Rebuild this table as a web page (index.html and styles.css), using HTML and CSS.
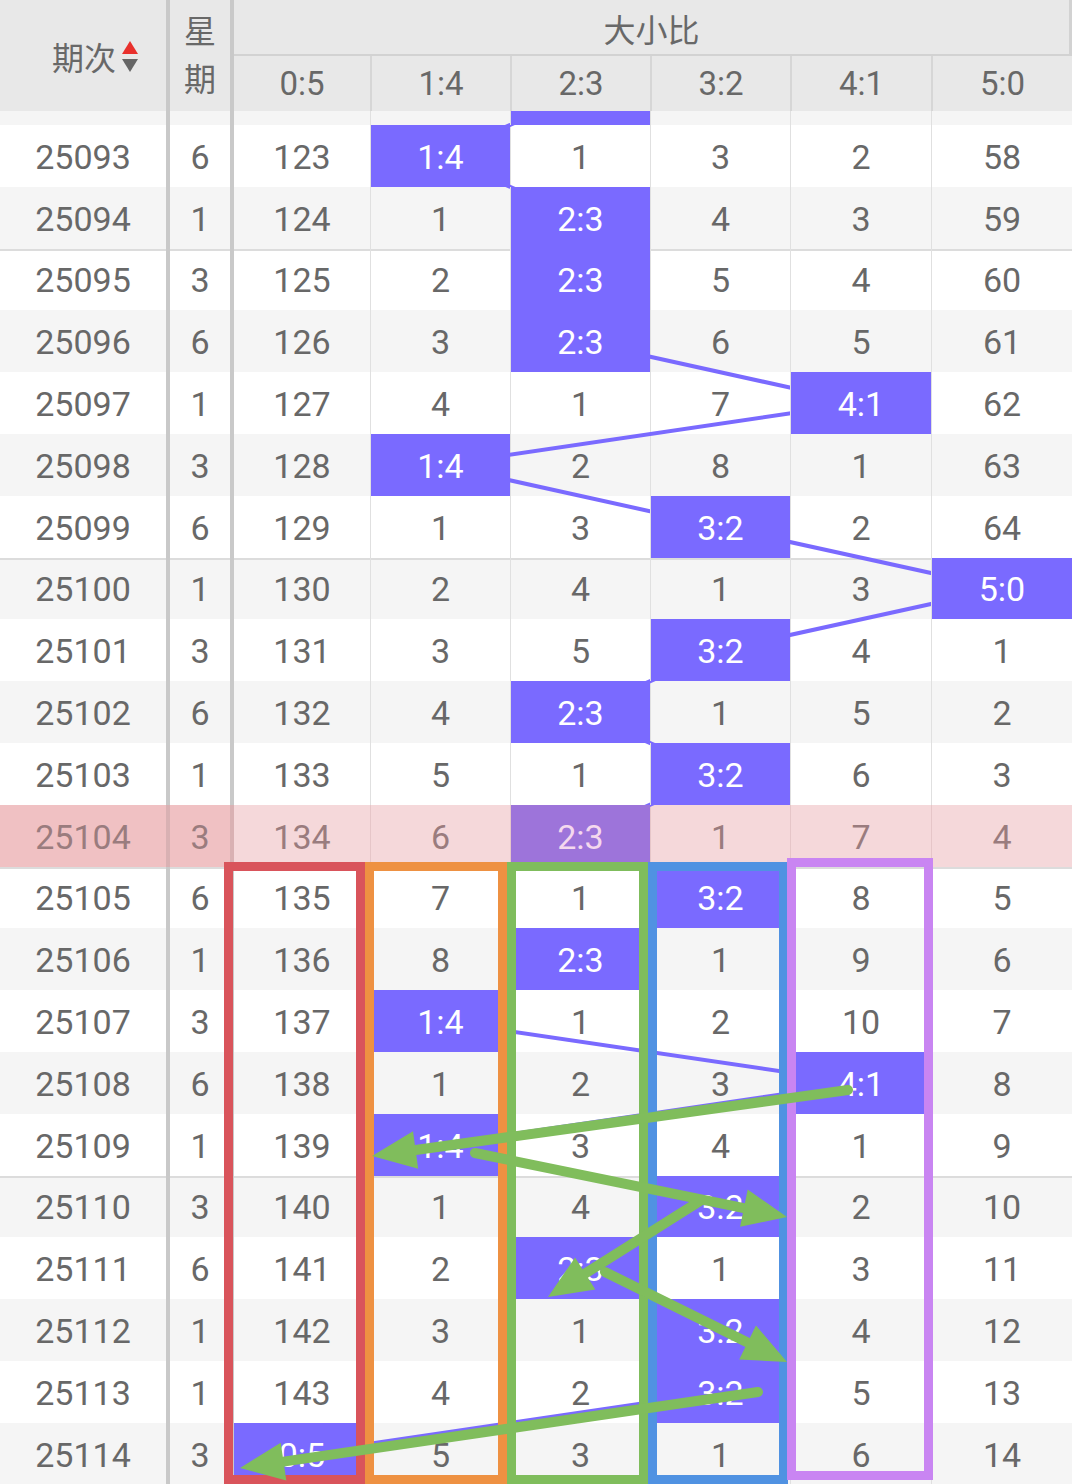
FILE: index.html
```html
<!DOCTYPE html>
<html lang="zh-CN">
<head>
<meta charset="utf-8">
<title>大小比走势</title>
<link rel="stylesheet" href="styles.css">
</head>
<body>
<div class="head">
  <div class="h-id"><span>期次</span><svg class="sort" width="16" height="32" viewBox="0 0 16 32"><polygon points="8,0 16,13 0,13" fill="#e8302c"/><polygon points="0,18 16,18 8,31" fill="#666"/></svg></div>
  <div class="h-wk"><span>星</span><span>期</span></div>
  <div class="h-grp">大小比</div>
  <div class="h-r first">0:5</div>
  <div class="h-r">1:4</div>
  <div class="h-r">2:3</div>
  <div class="h-r">3:2</div>
  <div class="h-r">4:1</div>
  <div class="h-r">5:0</div>
</div>
<div class="tbl">
  <svg class="trend" width="1072" height="1373" viewBox="0 0 1072 1373">
    <polyline fill="none" stroke="#7a6aff" stroke-width="4" stroke-linejoin="round" points="580,-16.9 440,44.9 580,106.7 580,168.5 580,230.3 860.5,292.1 440,353.9 720,415.7 1001.5,477.5 720,539.3 580,601.1 720,662.9 580,724.7 720,786.5 580,848.3 440,910.1 860.5,971.9 440,1033.7 720,1095.5 580,1157.3 720,1219.1 720,1280.9 302,1342.7"/>
  </svg>
  <div class="row g part"><div class="c id"></div><div class="c wk"></div><div class="c r"></div><div class="c r"></div><div class="c r on"></div><div class="c r"></div><div class="c r"></div><div class="c r"></div></div>
  <div class="row"><div class="c id">25093</div><div class="c wk">6</div><div class="c r">123</div><div class="c r on">1:4</div><div class="c r">1</div><div class="c r">3</div><div class="c r">2</div><div class="c r">58</div></div>
  <div class="row g"><div class="c id">25094</div><div class="c wk">1</div><div class="c r">124</div><div class="c r">1</div><div class="c r on">2:3</div><div class="c r">4</div><div class="c r">3</div><div class="c r">59</div></div>
  <div class="row sep"><div class="c id">25095</div><div class="c wk">3</div><div class="c r">125</div><div class="c r">2</div><div class="c r on">2:3</div><div class="c r">5</div><div class="c r">4</div><div class="c r">60</div></div>
  <div class="row g"><div class="c id">25096</div><div class="c wk">6</div><div class="c r">126</div><div class="c r">3</div><div class="c r on">2:3</div><div class="c r">6</div><div class="c r">5</div><div class="c r">61</div></div>
  <div class="row"><div class="c id">25097</div><div class="c wk">1</div><div class="c r">127</div><div class="c r">4</div><div class="c r">1</div><div class="c r">7</div><div class="c r on">4:1</div><div class="c r">62</div></div>
  <div class="row g"><div class="c id">25098</div><div class="c wk">3</div><div class="c r">128</div><div class="c r on">1:4</div><div class="c r">2</div><div class="c r">8</div><div class="c r">1</div><div class="c r">63</div></div>
  <div class="row"><div class="c id">25099</div><div class="c wk">6</div><div class="c r">129</div><div class="c r">1</div><div class="c r">3</div><div class="c r on">3:2</div><div class="c r">2</div><div class="c r">64</div></div>
  <div class="row g sep"><div class="c id">25100</div><div class="c wk">1</div><div class="c r">130</div><div class="c r">2</div><div class="c r">4</div><div class="c r">1</div><div class="c r">3</div><div class="c r on">5:0</div></div>
  <div class="row"><div class="c id">25101</div><div class="c wk">3</div><div class="c r">131</div><div class="c r">3</div><div class="c r">5</div><div class="c r on">3:2</div><div class="c r">4</div><div class="c r">1</div></div>
  <div class="row g"><div class="c id">25102</div><div class="c wk">6</div><div class="c r">132</div><div class="c r">4</div><div class="c r on">2:3</div><div class="c r">1</div><div class="c r">5</div><div class="c r">2</div></div>
  <div class="row"><div class="c id">25103</div><div class="c wk">1</div><div class="c r">133</div><div class="c r">5</div><div class="c r">1</div><div class="c r on">3:2</div><div class="c r">6</div><div class="c r">3</div></div>
  <div class="row pk"><div class="c id">25104</div><div class="c wk">3</div><div class="c r">134</div><div class="c r">6</div><div class="c r on">2:3</div><div class="c r">1</div><div class="c r">7</div><div class="c r">4</div></div>
  <div class="row sep"><div class="c id">25105</div><div class="c wk">6</div><div class="c r">135</div><div class="c r">7</div><div class="c r">1</div><div class="c r on">3:2</div><div class="c r">8</div><div class="c r">5</div></div>
  <div class="row g"><div class="c id">25106</div><div class="c wk">1</div><div class="c r">136</div><div class="c r">8</div><div class="c r on">2:3</div><div class="c r">1</div><div class="c r">9</div><div class="c r">6</div></div>
  <div class="row"><div class="c id">25107</div><div class="c wk">3</div><div class="c r">137</div><div class="c r on">1:4</div><div class="c r">1</div><div class="c r">2</div><div class="c r">10</div><div class="c r">7</div></div>
  <div class="row g"><div class="c id">25108</div><div class="c wk">6</div><div class="c r">138</div><div class="c r">1</div><div class="c r">2</div><div class="c r">3</div><div class="c r on">4:1</div><div class="c r">8</div></div>
  <div class="row"><div class="c id">25109</div><div class="c wk">1</div><div class="c r">139</div><div class="c r on">1:4</div><div class="c r">3</div><div class="c r">4</div><div class="c r">1</div><div class="c r">9</div></div>
  <div class="row g sep"><div class="c id">25110</div><div class="c wk">3</div><div class="c r">140</div><div class="c r">1</div><div class="c r">4</div><div class="c r on">3:2</div><div class="c r">2</div><div class="c r">10</div></div>
  <div class="row"><div class="c id">25111</div><div class="c wk">6</div><div class="c r">141</div><div class="c r">2</div><div class="c r on">2:3</div><div class="c r">1</div><div class="c r">3</div><div class="c r">11</div></div>
  <div class="row g"><div class="c id">25112</div><div class="c wk">1</div><div class="c r">142</div><div class="c r">3</div><div class="c r">1</div><div class="c r on">3:2</div><div class="c r">4</div><div class="c r">12</div></div>
  <div class="row"><div class="c id">25113</div><div class="c wk">1</div><div class="c r">143</div><div class="c r">4</div><div class="c r">2</div><div class="c r on">3:2</div><div class="c r">5</div><div class="c r">13</div></div>
  <div class="row g"><div class="c id">25114</div><div class="c wk">3</div><div class="c r on">0:5</div><div class="c r">5</div><div class="c r">3</div><div class="c r">1</div><div class="c r">6</div><div class="c r">14</div></div>
</div>
<svg class="marks" width="1072" height="1484" viewBox="0 0 1072 1484">
  <g fill="none" stroke-width="9">
    <rect x="228.5" y="866.5" width="132" height="613" stroke="#d9545b"/>
    <rect x="369.5" y="866.5" width="133" height="613" stroke="#ee9142"/>
    <rect x="511.5" y="866.5" width="132" height="613" stroke="#7fbd5c"/>
    <rect x="652.5" y="866.5" width="131" height="613" stroke="#5092e2"/>
    <rect x="791.5" y="862.5" width="137" height="613" stroke="#c985f2"/>
  </g>
  <g stroke="#80bd5c" stroke-width="10" stroke-linecap="round" fill="#80bd5c">
    <line x1="848" y1="1090" x2="415.6" y2="1150"/>
    <polygon stroke="none" points="372,1156 413,1131.2 418.2,1168.8"/>
    <line x1="475" y1="1153" x2="743.9" y2="1208.2"/>
    <polygon stroke="none" points="787,1217 740.1,1226.8 747.7,1189.6"/>
    <line x1="700" y1="1201" x2="585.2" y2="1273.5"/>
    <polygon stroke="none" points="548,1297 575.1,1257.4 595.3,1289.6"/>
    <line x1="605" y1="1272" x2="747.6" y2="1342.5"/>
    <polygon stroke="none" points="787,1362 739.2,1359.5 756,1325.5"/>
    <line x1="758" y1="1392" x2="283.5" y2="1461.6"/>
    <polygon stroke="none" points="240,1468 280.7,1442.8 286.3,1480.4"/>
  </g>
</svg>
</body>
</html>
```
FILE: styles.css
```css
html, body {
  margin: 0;
  padding: 0;
}
body {
  width: 1072px;
  height: 1484px;
  overflow: hidden;
  position: relative;
  background: #fff;
  color: #686868;
  font-family: Roboto, "Noto Sans CJK SC", sans-serif;
  font-weight: 400;
}
.head {
  display: grid;
  grid-template-columns: 170px 64px 136px 140px 140px 140px 141px 141px;
  grid-template-rows: 56px 55px;
  height: 111px;
  background: #e8e8e8;
}
.h-id {
  grid-row: 1 / 3;
  grid-column: 1;
  border-right: 4px solid #c9c9c9;
  display: flex;
  align-items: center;
  justify-content: center;
  gap: 6px;
  padding-left: 24px;
  font-size: 32px;
}
.sort {
  display: block;
  margin-top: 2px;
}
.h-wk {
  grid-row: 1 / 3;
  grid-column: 2;
  border-right: 4px solid #c9c9c9;
  display: flex;
  flex-direction: column;
  align-items: center;
  justify-content: center;
  font-size: 32px;
  line-height: 48px;
}
.h-grp {
  grid-column: 3 / 9;
  grid-row: 1;
  border-bottom: 2px solid #d2d2d2;
  border-right: 3px solid #d2d2d2;
  display: flex;
  align-items: center;
  justify-content: center;
  font-size: 32px;
  padding-top: 2px;
}
.h-r {
  grid-row: 2;
  border-left: 2px solid #d6d6d6;
  display: flex;
  align-items: center;
  justify-content: center;
  font-size: 33px;
}
.h-r.first {
  border-left: none;
}
.tbl {
  position: relative;
  height: 1373px;
  overflow: hidden;
}
.trend {
  position: absolute;
  left: 0;
  top: 0;
  z-index: 0;
}
.row {
  display: grid;
  grid-template-columns: 170px 64px 136px 140px 140px 140px 141px 141px;
  height: 61.8px;
  background: #fff;
}
.row.g {
  background: #f5f5f5;
}
.row.part {
  height: 14px;
}
.row.sep {
  box-shadow: inset 0 2px 0 #dcdcdc;
}
.c {
  display: flex;
  align-items: center;
  justify-content: center;
  font-size: 34px;
  box-sizing: border-box;
  padding-top: 2px;
}
.c.id,
.c.wk {
  border-right: 4px solid #c9c9c9;
}
.c.r + .c.r {
  border-left: 1px solid #e0e0e0;
}
.c.on {
  background: #7a6aff;
  color: #fff;
  position: relative;
  z-index: 1;
}
.row.pk {
  background: #f5d8da;
  color: #9a7c7e;
}
.row.pk .c.id,
.row.pk .c.wk {
  background: #f0c1c3;
  border-right-color: #d9b1b3;
}
.row.pk .c.r + .c.r {
  border-left-color: #e6c6c8;
}
.row.pk .c.on {
  background: #9d74da;
  color: #f4d8ee;
}
.marks {
  position: absolute;
  left: 0;
  top: 0;
  z-index: 5;
  pointer-events: none;
}
```
